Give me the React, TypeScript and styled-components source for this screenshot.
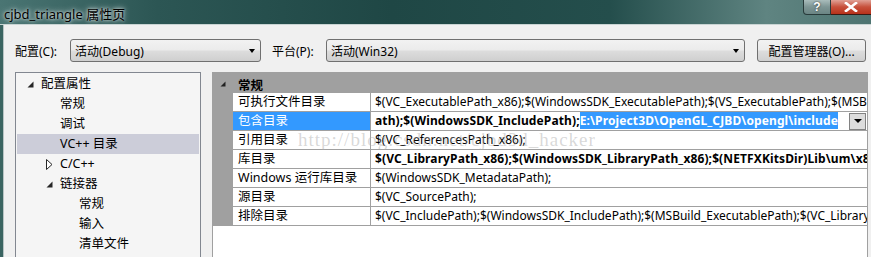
import * as React from 'react'
import styled, { createGlobalStyle } from 'styled-components'

const GlobalStyle = createGlobalStyle`
  html, body {
    margin: 0;
    padding: 0;
    width: 871px;
    height: 257px;
    overflow: hidden;
    background: #f0f0f0;
  }
  * {
    box-sizing: border-box;
  }
`

const uiFont = `"Noto Sans", "Noto Sans CJK SC", sans-serif`

const treeItems = [
  { label: '配置属性', level: 0, expander: 'open' },
  { label: '常规', level: 1 },
  { label: '调试', level: 1 },
  { label: 'VC++ 目录', level: 1, selected: true },
  { label: 'C/C++', level: 1, expander: 'closed' },
  { label: '链接器', level: 1, expander: 'open' },
  { label: '常规', level: 2 },
  { label: '输入', level: 2 },
  { label: '清单文件', level: 2 },
]

const rows = [
  {
    name: '可执行文件目录',
    value: '$(VC_ExecutablePath_x86);$(WindowsSDK_ExecutablePath);$(VS_ExecutablePath);$(MSBuild_ExecutablePath);$(SystemRoot)',
  },
  {
    name: '包含目录',
    value: 'ath);$(WindowsSDK_IncludePath);',
    highlight: 'E:\\Project3D\\OpenGL_CJBD\\opengl\\include',
    bold: true,
    editing: true,
  },
  { name: '引用目录', value: '$(VC_ReferencesPath_x86);' },
  {
    name: '库目录',
    value: '$(VC_LibraryPath_x86);$(WindowsSDK_LibraryPath_x86);$(NETFXKitsDir)Lib\\um\\x86;',
    bold: true,
  },
  { name: 'Windows 运行库目录', value: '$(WindowsSDK_MetadataPath);' },
  { name: '源目录', value: '$(VC_SourcePath);' },
  {
    name: '排除目录',
    value: '$(VC_IncludePath);$(WindowsSDK_IncludePath);$(MSBuild_ExecutablePath);$(VC_LibraryPath_x86);',
  },
]

const App: React.FC = () => {
  return (
    <>
      <GlobalStyle />
      <Window>
        <TitleBar>
          <Title>cjbd_triangle 属性页</Title>
          <CaptionButtons>
            <HelpButton>?</HelpButton>
            <CloseButton>
              <svg width="14" height="10" viewBox="0 0 14 10">
                <path d="M2 1 L12 9 M12 1 L2 9" stroke="#fff" strokeWidth="2.6" strokeLinecap="square" />
              </svg>
            </CloseButton>
          </CaptionButtons>
        </TitleBar>
        <Frame>
          <Body>
            <ConfigRow>
              <Label $width={55}>配置(C):</Label>
              <Combo $width={191}>
                <span>活动(Debug)</span>
                <Arrow />
              </Combo>
              <Label $width={54} $offset={11}>平台(P):</Label>
              <Combo $width={419}>
                <span>活动(Win32)</span>
                <Arrow />
              </Combo>
              <PushButton>配置管理器(O)...</PushButton>
            </ConfigRow>
            <Main>
              <Tree>
                {treeItems.map((item, i) => (
                  <TreeItem key={i} $level={item.level} $selected={!!item.selected}>
                    {item.expander && (
                      <Expander $level={item.level}>
                        {item.expander === 'open' ? (
                          <svg width="7" height="7" viewBox="0 0 7 7">
                            <path d="M6.5 0.5 L6.5 6.5 L0.5 6.5 Z" fill="#262626" />
                          </svg>
                        ) : (
                          <svg width="7" height="11" viewBox="0 0 7 11">
                            <path d="M0.5 0.5 L6 5.5 L0.5 10.5 Z" fill="#fff" stroke="#262626" />
                          </svg>
                        )}
                      </Expander>
                    )}
                    {item.label}
                  </TreeItem>
                ))}
              </Tree>
              <Grid>
                <CategoryRow>
                  <Gutter $category>
                    <svg width="6" height="6" viewBox="0 0 6 6">
                      <path d="M5.5 0.5 L5.5 5.5 L0.5 5.5 Z" fill="#222" />
                    </svg>
                  </Gutter>
                  <CategoryName>常规</CategoryName>
                </CategoryRow>
                {rows.map((row, i) => (
                  <PropRow key={i}>
                    <Gutter />
                    <NameCell $selected={!!row.editing}>{row.name}</NameCell>
                    <ValueCell $bold={!!row.bold}>
                      <ValueText>
                        {row.value}
                        {row.highlight && <Highlight>{row.highlight}</Highlight>}
                      </ValueText>
                      {row.editing && (
                        <DropButton>
                          <svg width="8" height="4" viewBox="0 0 8 4">
                            <path d="M0 0 L8 0 L4 4 Z" fill="#000" />
                          </svg>
                        </DropButton>
                      )}
                    </ValueCell>
                  </PropRow>
                ))}
                <Watermark>http://blog.csdn.net/cjbd3d_hacker</Watermark>
              </Grid>
            </Main>
          </Body>
        </Frame>
      </Window>
    </>
  )
}

const Window = styled.div`
  width: 871px;
  height: 257px;
  display: flex;
  flex-direction: column;
  font-family: ${uiFont};
  font-size: 12px;
  color: #000;
  overflow: hidden;
`

const TitleBar = styled.div`
  height: 25px;
  flex-shrink: 0;
  display: flex;
  align-items: flex-start;
  background: linear-gradient(
    90deg,
    #4a7573 0%,
    #2c5654 18%,
    #1f4745 45%,
    #244e4c 70%,
    #5f8481 88%,
    #4e7471 100%
  );
  border-bottom: 1px solid #c9d4d3;
`

const Title = styled.div`
  padding: 4px 0 0 4px;
  font-size: 13px;
  color: #000;
  text-shadow: 0 0 6px rgba(255, 255, 255, 0.9), 0 0 3px rgba(255, 255, 255, 0.8);
`

const CaptionButtons = styled.div`
  margin-left: auto;
  display: flex;
  height: 15px;
`

const HelpButton = styled.div`
  width: 28px;
  height: 15px;
  border: 1px solid #283a3a;
  border-top: none;
  border-bottom-left-radius: 4px;
  background: linear-gradient(#a9bcbb, #7d9594 50%, #6b8584);
  color: #fff;
  font-family: "Liberation Sans", sans-serif;
  font-weight: bold;
  font-size: 12px;
  line-height: 14px;
  text-align: center;
  text-shadow: 0 0 2px #222;
`

const CloseButton = styled.div`
  width: 40px;
  height: 15px;
  border-bottom: 1px solid #3b1a14;
  background: linear-gradient(#e0a196, #c7503b 50%, #b8321b);
  display: flex;
  align-items: center;
  justify-content: center;
`

const Frame = styled.div`
  flex: 1;
  display: flex;
  border-left: 3px solid #3a6461;
`

const Body = styled.div`
  flex: 1;
  background: #f0f0f0;
  border-left: 1px solid #b8c4c4;
  padding: 14px 0 0 11px;
`

const ConfigRow = styled.div`
  height: 23px;
  display: flex;
  align-items: center;
`

const Label = styled.div<{ $width: number; $offset?: number }>`
  width: ${(p) => p.$width}px;
  margin-left: ${(p) => p.$offset || 0}px;
  flex-shrink: 0;
`

const Combo = styled.div<{ $width: number }>`
  width: ${(p) => p.$width}px;
  height: 23px;
  flex-shrink: 0;
  display: flex;
  align-items: center;
  padding: 0 5px 0 4px;
  border: 1px solid #707070;
  border-radius: 3px;
  background: linear-gradient(#f2f2f2 0%, #ebebeb 48%, #dddddd 52%, #cfcfcf 100%);

  span {
    flex: 1;
  }
`

const Arrow = styled.div`
  width: 0;
  height: 0;
  border-left: 3.5px solid transparent;
  border-right: 3.5px solid transparent;
  border-top: 4px solid #000;
`

const PushButton = styled.div`
  width: 109px;
  height: 23px;
  margin-left: 12px;
  flex-shrink: 0;
  display: flex;
  align-items: center;
  justify-content: center;
  border: 1px solid #707070;
  border-radius: 3px;
  background: linear-gradient(#f2f2f2 0%, #ebebeb 48%, #dddddd 52%, #cfcfcf 100%);
`

const Main = styled.div`
  margin-top: 10px;
  display: flex;
  gap: 11px;
`

const Tree = styled.div`
  width: 186px;
  height: 200px;
  flex-shrink: 0;
  padding: 1px 1px;
  border: 1px solid #828790;
  background: #f5f5f5;
`

const TreeItem = styled.div<{ $level: number; $selected: boolean }>`
  position: relative;
  height: 20px;
  line-height: 20px;
  padding-left: ${(p) => 24 + p.$level * 19}px;
  background: ${(p) => (p.$selected ? '#cccdd9' : 'transparent')};
  font-size: 12.5px;
`

const Expander = styled.span<{ $level: number }>`
  position: absolute;
  left: ${(p) => 10 + p.$level * 19}px;
  top: 0;
  height: 20px;
  display: flex;
  align-items: center;
`

const Grid = styled.div`
  position: relative;
  width: 656px;
  height: 200px;
  border-left: 1px solid #a0a0a0;
  border-right: 1px solid #a0a0a0;
  background: #fff;
`

const CategoryRow = styled.div`
  height: 21px;
  display: flex;
  background: #a0a0a0;
`

const Gutter = styled.div<{ $category?: boolean }>`
  width: 20px;
  flex-shrink: 0;
  display: flex;
  align-items: center;
  justify-content: center;
  padding-top: ${(p) => (p.$category ? 2 : 0)}px;
  background: #a0a0a0;
`

const CategoryName = styled.div`
  padding: 3px 0 0 5px;
  font-weight: bold;
  font-size: 12.5px;
`

const PropRow = styled.div`
  height: 19px;
  display: flex;
  border-bottom: 1px solid #a0a0a0;
`

const NameCell = styled.div<{ $selected: boolean }>`
  width: 138px;
  flex-shrink: 0;
  padding-left: 5px;
  line-height: 18px;
  font-size: 12.5px;
  border-right: 1px solid #a0a0a0;
  white-space: nowrap;
  background: ${(p) => (p.$selected ? '#3399ff' : '#fff')};
  color: ${(p) => (p.$selected ? '#fff' : '#000')};
`

const ValueCell = styled.div<{ $bold: boolean }>`
  flex: 1;
  min-width: 0;
  display: flex;
  align-items: center;
  padding-left: 4px;
  font-weight: ${(p) => (p.$bold ? 'bold' : 'normal')};
  letter-spacing: ${(p) => (p.$bold ? '0.12px' : 'normal')};
  white-space: nowrap;
  overflow: hidden;
`

const ValueText = styled.div`
  flex: 1;
  min-width: 0;
  overflow: hidden;
  line-height: 18px;
`

const Highlight = styled.span`
  background: #3399ff;
  color: #fff;
`

const DropButton = styled.div`
  width: 17px;
  height: 17px;
  margin-right: 1px;
  flex-shrink: 0;
  display: flex;
  align-items: center;
  justify-content: center;
  background: #dcdcdc;
  border: 1px solid #828282;
`

const Watermark = styled.div`
  position: absolute;
  left: 85px;
  top: 57px;
  font-family: "Liberation Serif", serif;
  font-size: 19px;
  letter-spacing: 1px;
  color: rgba(170, 170, 170, 0.45);
  white-space: nowrap;
  pointer-events: none;
`

export default App
